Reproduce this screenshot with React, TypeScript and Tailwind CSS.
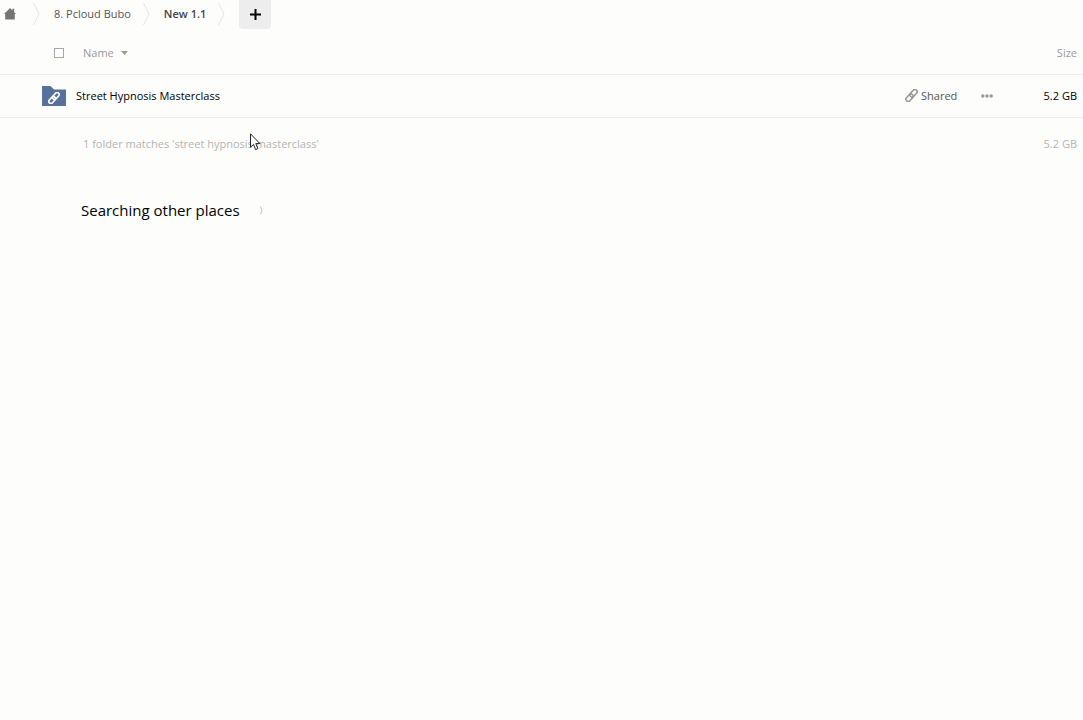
import React, { useState } from 'react';

const crumbs = [
  { label: '8. Pcloud Bubo', current: false },
  { label: 'New 1.1', current: true },
];

const files = [{ name: 'Street Hypnosis Masterclass', size: '5.2 GB', shared: true }];

function HomeIcon() {
  return (
    <svg width="12" height="12" viewBox="0 0 12 12" fill="#747474" aria-hidden="true">
      <path d="M6 0 0 6h1.2v5.6h9.6V6H12l-1.8-1.8V.8H8.4v1.6z" />
    </svg>
  );
}

function Chevron() {
  return (
    <svg width="7" height="24" viewBox="0 0 7 24" fill="none" stroke="#e4e4e2" aria-hidden="true">
      <path d="M.5 1 6 12 .5 23" />
    </svg>
  );
}

function LinkIcon({ size, color, weight }: { size: number; color: string; weight: number }) {
  return (
    <svg width={size} height={size} viewBox="0 0 14 14" fill="none" stroke={color} strokeWidth={weight} aria-hidden="true">
      <g transform="rotate(-48 7 7)">
        <rect x="-.8" y="4.6" width="9.2" height="4.8" rx="2.4" />
        <rect x="5.6" y="4.6" width="9.2" height="4.8" rx="2.4" />
      </g>
    </svg>
  );
}

function FolderIcon() {
  return (
    <span className="grid shrink-0">
      <svg width="24" height="20" viewBox="0 0 24 20" fill="#56719a" className="col-start-1 row-start-1" aria-hidden="true">
        <path d="M0 0h8.5L12 3.4h12V20H0z" />
      </svg>
      <span className="col-start-1 row-start-1 flex items-center justify-center pt-1">
        <LinkIcon size={12} color="#ffffff" weight={1.9} />
      </span>
    </span>
  );
}

function Cursor() {
  return (
    <svg width="11" height="18" viewBox="0 0 11 18" className="absolute left-[250px] top-[15px]" aria-hidden="true">
      <path d="M.5.8v13.4l3-2.8 2.1 5.2 2.3-1-2.1-5h4.1z" fill="#fff" stroke="#222" />
    </svg>
  );
}

export default function App() {
  const [allChecked, setAllChecked] = useState(false);

  return (
    <div className="min-h-screen bg-[#fdfdfc] font-['Open_Sans','Noto_Sans',sans-serif] text-[11px] leading-4 text-black">
      <nav aria-label="Breadcrumb" className="flex h-[29px] items-start">
        <a href="#home" aria-label="Home" className="flex h-7 items-center pl-1">
          <HomeIcon />
        </a>
        <span className="flex h-7 items-center pl-[17px]">
          <Chevron />
        </span>
        {crumbs.map((crumb) => (
          <span key={crumb.label} className="flex h-7 items-center gap-3 pl-[14px]">
            <a
              href="#folder"
              className={crumb.current ? 'font-semibold text-[#444]' : 'text-[#555]'}
            >
              {crumb.label}
            </a>
            <Chevron />
          </span>
        ))}
        <button
          type="button"
          aria-label="Add"
          className="ml-[14px] flex h-[29px] w-8 items-center justify-center rounded-b-sm bg-[#ededed]"
        >
          <svg width="11" height="11" viewBox="0 0 11 11" stroke="#000" strokeWidth="2" aria-hidden="true">
            <path d="M5.5 0v11M0 5.5h11" />
          </svg>
        </button>
      </nav>

      <table className="w-full border-collapse">
        <thead>
          <tr className="h-[45px] border-b border-[#ececea] text-[#999]">
            <th className="p-0 pt-1 pl-[54px] text-left font-normal">
              <div className="flex items-center">
                <input
                  type="checkbox"
                  aria-label="Select all"
                  checked={allChecked}
                  onChange={(e) => setAllChecked(e.target.checked)}
                  className="size-[10px] appearance-none border border-[#a8a8a8] bg-white checked:bg-[#56719a]"
                />
                <button type="button" className="ml-[19px] flex items-center gap-[7px]">
                  Name
                  <svg width="7" height="4" viewBox="0 0 7 4" fill="#999" aria-hidden="true">
                    <path d="M0 0h7L3.5 4z" />
                  </svg>
                </button>
              </div>
            </th>
            <th className="w-[62px] p-0" aria-label="Sharing" />
            <th className="w-10 p-0" aria-label="Actions" />
            <th className="w-[76px] p-0 pt-1 pr-[6px] text-right font-normal">Size</th>
          </tr>
        </thead>
        <tbody>
          {files.map((file) => (
            <tr key={file.name} className="h-[43px] border-b border-[#ececea]">
              <td className="p-0 pl-[42px]">
                <div className="flex items-center gap-[10px]">
                  <FolderIcon />
                  <a href="#file">{file.name}</a>
                </div>
              </td>
              <td className="p-0">
                {file.shared && (
                  <button type="button" className="flex items-center gap-[3px] text-[#555]">
                    <LinkIcon size={13} color="#999999" weight={1.7} />
                    Shared
                  </button>
                )}
              </td>
              <td className="p-0">
                <button type="button" aria-label="More actions" className="flex h-4 w-full items-center justify-center">
                  <svg width="12" height="4" viewBox="0 0 12 4" fill="#999" aria-hidden="true">
                    <circle cx="1.8" cy="2" r="1.7" />
                    <circle cx="6" cy="2" r="1.7" />
                    <circle cx="10.2" cy="2" r="1.7" />
                  </svg>
                </button>
              </td>
              <td className="p-0 pr-[6px] text-right">{file.size}</td>
            </tr>
          ))}
        </tbody>
        <tfoot>
          <tr className="h-[54px] text-[#b4b4b4]">
            <td colSpan={3} className="relative p-0 pl-[83px]">
              1 folder matches 'street hypnosis masterclass'
              <Cursor />
            </td>
            <td className="p-0 pr-[6px] text-right">5.2 GB</td>
          </tr>
        </tfoot>
      </table>

      <section className="flex items-center gap-5 pt-[27px] pl-[81px]">
        <h2 className="text-[15px] leading-6">Searching other places</h2>
        <svg width="3" height="9" viewBox="0 0 3 9" fill="none" stroke="#c4c4c4" role="img" aria-label="Loading">
          <path d="M.5.5q3 4 0 8" />
        </svg>
      </section>
    </div>
  );
}
